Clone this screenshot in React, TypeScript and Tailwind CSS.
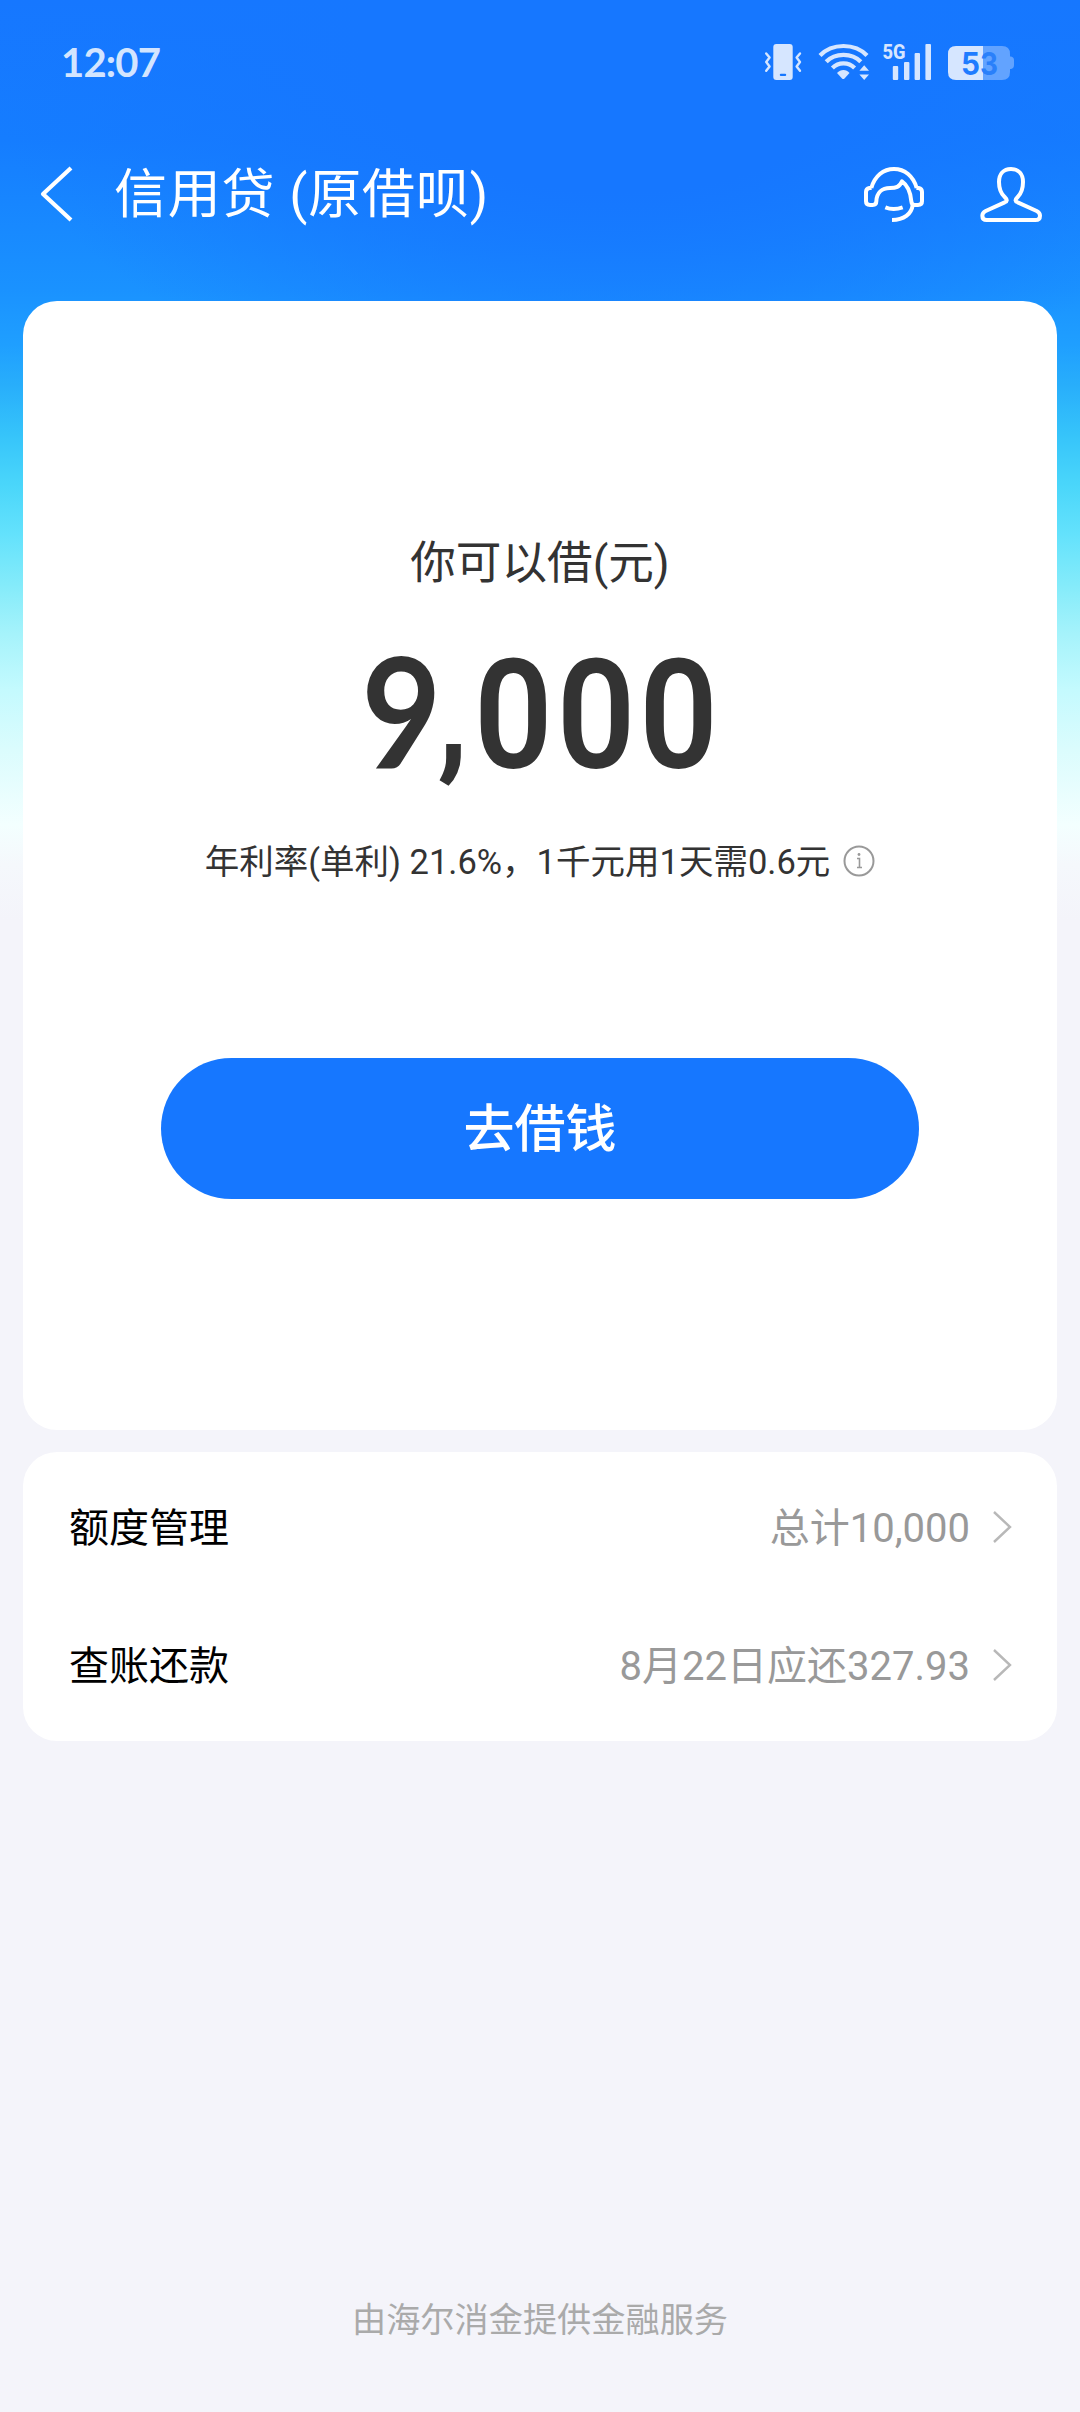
const rows = [
  { label: "额度管理", value: "总计10,000" },
  { label: "查账还款", value: "8月22日应还327.93" },
];

function StatusIcons() {
  return (
    <svg className="h-[44px] w-[254px]" viewBox="764 40 254 44" fill="#d6e6ff">
      {/* vibrate */}
      <rect x="773.3" y="44" width="19.4" height="36" rx="3" />
      <rect x="779.8" y="73.8" width="6.4" height="2.2" rx="1" fill="#1677ff" />
      <g fill="none" stroke="#d6e6ff" strokeWidth="2.4" strokeLinecap="round" strokeLinejoin="round">
        <path d="M766.2 53.5L769.6 57.6L766.2 62L769.6 66.4L766.2 70.8" />
        <path d="M800 53.5L796.6 57.6L800 62L796.6 66.4L800 70.8" />
      </g>
      {/* wifi */}
      <g fill="none" stroke="#d6e6ff" strokeWidth="4.2">
        <path d="M820 55.5C832 42.8 855 42.8 867 55.5" />
        <path d="M826.2 61.8C835 52.5 852 52.5 860.8 61.8" />
        <path d="M832.4 68C838.5 61.8 848.5 61.8 854.6 68" />
      </g>
      <path d="M837 73C840.5 69 846.5 69 849.5 73L844.5 78.5Q843.2 79.6 842 78.5Z" />
      <path d="M859.4 70.8L864.2 65.2L869 70.8ZM859.4 74.4L864.2 80L869 74.4Z" />
      {/* signal */}
      <text x="882.5" y="58.5" fontSize="20.5" fontWeight="800" fontFamily="Roboto, sans-serif" textLength="23" lengthAdjust="spacingAndGlyphs">
        5G
      </text>
      <rect x="892.8" y="66" width="5.4" height="14" rx="1" />
      <rect x="904" y="62" width="5.4" height="18" rx="1" />
      <rect x="914.6" y="53" width="5.4" height="27" rx="1" />
      <rect x="925.4" y="44" width="5.6" height="36" rx="1" />
      {/* battery */}
      <path d="M983 46H1002Q1010 46 1010 54V56.5H1011Q1014 57 1014 60V65Q1014 68.5 1011 69H1010V72Q1010 80 1002 80H983Z" fill="#62a3ff" />
      <path d="M983 46H956Q948 46 948 54V72Q948 80 956 80H983Z" />
      <g fontSize="31" fontWeight="700" fontFamily="Inter, sans-serif">
        <text x="961" y="74.5" fill="#1f7cff" textLength="19" lengthAdjust="spacingAndGlyphs">5</text>
        <text x="980" y="74.5" fill="#2a80fa" textLength="18" lengthAdjust="spacingAndGlyphs">3</text>
      </g>
    </svg>
  );
}

function StatusBar() {
  return (
    <div className="flex h-[124px] items-center justify-between pr-[62px] pl-[61px]">
      <span className="pb-[1px] font-[Lato] text-[40px] leading-none font-bold tracking-[-0.8px] text-[#d3e5ff]">
        12:07
      </span>
      <StatusIcons />
    </div>
  );
}

function Header() {
  return (
    <header className="flex h-[140px] items-center pr-[36px] pl-[39px] text-white">
      <svg className="h-[56px] w-[36px]" viewBox="0 0 36 56" fill="none" stroke="currentColor" strokeWidth="4.2">
        <path d="M32 2L4 28L32 54" strokeLinejoin="round" />
      </svg>
      <h1 className="ml-[39px] pt-[3px] text-[53px] leading-none tracking-[0.8px] whitespace-nowrap">
        信用贷 (原借呗)
      </h1>
      <svg
        className="ml-auto h-[60px] w-[64px]"
        viewBox="66 72 192 180"
        fill="none"
        stroke="currentColor"
        strokeWidth="12"
        strokeLinejoin="round"
      >
        <path d="M94 144C104 108 130 87 162 87S220 108 230 144" />
        <path d="M95 144H88Q78 146 78 156V184Q78 195 90 195H98Q109 195 109 184C110 158 126 144 150 144C168 144 178 142 186 124C206 138 212 158 214 184Q215 195 224 195H234Q246 195 246 184V156Q246 146 236 144H229" />
        <path d="M218 196C214 222 192 240 156 240" />
        <path d="M136 202Q160 212 188 202" />
      </svg>
      <svg
        className="ml-[52px] h-[60px] w-[66px]"
        viewBox="414 72 198 180"
        fill="none"
        stroke="currentColor"
        strokeWidth="12"
        strokeLinejoin="round"
      >
        <path d="M513 87C490 87 477 103 477 126C477 146 482 160 494 171C503 180 502 183 494 187L437 213Q427 218 427 227Q427 240 440 240H586Q600 240 600 227Q600 218 590 213L533 187C525 183 524 180 533 171C544 160 549 146 549 126C549 103 536 87 513 87Z" />
      </svg>
    </header>
  );
}

function Amount() {
  return (
    <svg className="mt-[22px] h-[200px] w-[360px] overflow-visible" viewBox="0 -20 360 200" fill="currentColor">
      {/* condensed numerals */}
      <g transform="scale(0.9 1)" fontSize="153" textAnchor="middle">
        <text x="46" y="131.5" fontWeight="700" fontFamily="Lato, sans-serif">
          9
        </text>
        <text y="131.5" fontWeight="600" fontFamily="Roboto, sans-serif">
          <tspan x="103" y="125" fontSize="146">
            ,
          </tspan>
          <tspan x="170.3 262.2 354.1" y="131.5">
            000
          </tspan>
        </text>
      </g>
    </svg>
  );
}

function QuotaCard() {
  return (
    <section className="flex h-[1129px] flex-col items-center rounded-[34px] bg-white pt-[233px] text-[#333]">
      <p className="text-[45.6px] leading-[60px]">你可以借(元)</p>
      <Amount />
      <div className="mt-[20px] flex h-[50px] items-center gap-[13px]">
        <span className="pt-[2px] text-[34.5px] leading-none whitespace-nowrap">
          年利率(单利) 21.6%，1千元用1天需0.6元
        </span>
        <svg className="size-[32px]" viewBox="0 0 32 32" fill="none" stroke="#999" strokeWidth="2">
          <circle cx="16" cy="16" r="14.5" />
          <path d="M14 13.5H16.5V22.5M14 22.5H19" strokeWidth="1.6" />
          <circle cx="16" cy="9.5" r="1.4" fill="#999" stroke="none" />
        </svg>
      </div>
      <button className="mt-[172px] h-[141px] w-[758px] rounded-full bg-[#1677ff] pt-[2px] text-[51px] leading-none font-medium text-white">
        去借钱
      </button>
    </section>
  );
}

export default function App() {
  return (
    <div className="h-[2412px] w-[1080px] overflow-hidden bg-[#f4f4fa] bg-[radial-gradient(ellipse_640px_380px_at_620px_40px,#1677ff_40%,#1677ff00_100%),linear-gradient(180deg,#1677ff_0px,#157dff_140px,#1a92ff_290px,#1f9fff_345px,#28aefb_385px,#36c4fa_435px,#4ad6fa_485px,#64e2fc_535px,#84ebfa_585px,#a6f3fb_635px,#c4fafe_690px,#dbfcfd_750px,#f3ffff_825px,#f5f8fc_865px,#f4f4fa_920px)] font-[Roboto,'Noto_Sans_CJK_SC',sans-serif]">
      <StatusBar />
      <Header />
      <main className="mt-[37px] flex flex-col gap-[22px] px-[23px]">
        <QuotaCard />
        <section className="flex h-[289px] flex-col rounded-[34px] bg-white pt-[6px] text-[40px] leading-none">
          {rows.map((row) => (
            <div key={row.label} className="flex h-[138px] items-center pr-[44px] pl-[46px]">
              <span className="pt-[4px] text-black">{row.label}</span>
              <span className="ml-auto pt-[4px] text-[#999]">{row.value}</span>
              <svg className="ml-[21px] h-[34px] w-[22px]" viewBox="0 0 22 34" fill="none" stroke="#b8b8b8" strokeWidth="2.4">
                <path d="M3 2L19 17L3 32" />
              </svg>
            </div>
          ))}
        </section>
      </main>
      <footer className="mt-[554px] text-center text-[34.2px] leading-[50px] text-[#aaa]">
        由海尔消金提供金融服务
      </footer>
    </div>
  );
}
